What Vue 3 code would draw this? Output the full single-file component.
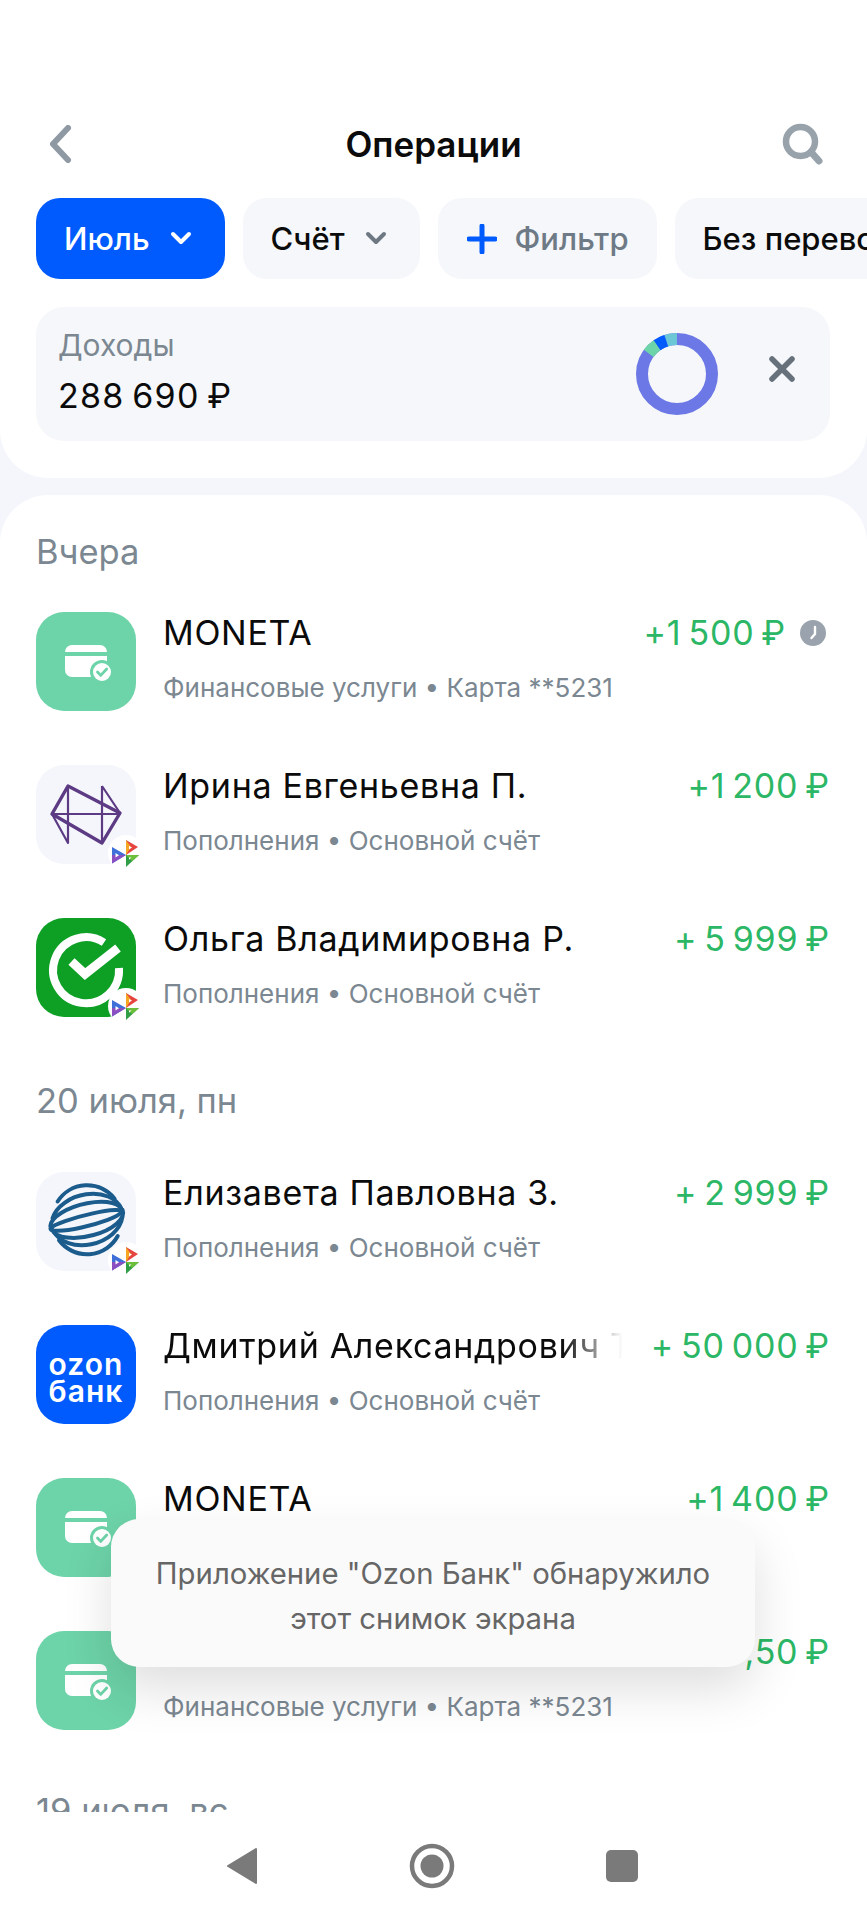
<script setup>
const filters = [
  { label: 'Июль', kind: 'active', chevron: true },
  { label: 'Счёт', kind: 'plain', chevron: true },
  { label: 'Фильтр', kind: 'add' },
  { label: 'Без переводов', kind: 'plain' }
];

const moneta = 'Финансовые услуги • Карта **5231';
const refill = 'Пополнения • Основной счёт';

const sections = [
  {
    date: 'Вчера',
    rows: [
      { logo: 'card', name: 'MONETA', sub: moneta, amount: '+1\u2009500\u2009₽', pending: true },
      { logo: 'prism', name: 'Ирина Евгеньевна П.', sub: refill, amount: '+1\u2009200\u2009₽', badge: true },
      { logo: 'sber', name: 'Ольга Владимировна Р.', sub: refill, amount: '+\u20095\u2009999\u2009₽', badge: true }
    ]
  },
  {
    date: '20 июля, пн',
    rows: [
      { logo: 'globe', name: 'Елизавета Павловна З.', sub: refill, amount: '+\u20092\u2009999\u2009₽', badge: true },
      { logo: 'ozon', name: 'Дмитрий Александрович Т.', sub: refill, amount: '+\u200950\u2009000\u2009₽' },
      { logo: 'card', name: 'MONETA', sub: moneta, amount: '+1\u2009400\u2009₽' },
      { logo: 'card', name: 'MONETA', sub: moneta, amount: '+1\u2009250,50\u2009₽' }
    ]
  },
  { date: '19 июля, вс', rows: [] }
];
</script>

<template>
  <div class="page">
    <main class="content">
      <section class="top">
        <header class="bar">
          <svg class="back" width="24" height="38" viewBox="0 0 24 38">
            <path d="M20 3 5 19l15 16" fill="none" stroke="#8e99a3" stroke-width="6" stroke-linecap="round" stroke-linejoin="round" />
          </svg>
          <h1>Операции</h1>
          <svg class="search" width="42" height="42" viewBox="0 0 42 42">
            <circle cx="18.5" cy="18.5" r="14.5" fill="none" stroke="#98a2ab" stroke-width="6.5" />
            <path d="M29 29l8 9" stroke="#98a2ab" stroke-width="7" stroke-linecap="round" />
          </svg>
        </header>

        <div class="chips">
          <div v-for="f in filters" :key="f.label" class="chip" :class="[f.kind, { drop: f.chevron }]">
            <svg v-if="f.kind === 'add'" class="plus" width="30" height="30" viewBox="0 0 30 30">
              <path d="M15 2v26M2 15h26" stroke="#005bff" stroke-width="5" stroke-linecap="round" />
            </svg>
            <span>{{ f.label }}</span>
            <svg v-if="f.chevron" class="chev" width="22" height="15" viewBox="0 0 22 15">
              <path d="M3 3l8 8 8-8" fill="none" stroke="currentColor" stroke-width="4" stroke-linecap="round" stroke-linejoin="round" />
            </svg>
          </div>
        </div>

        <div class="summary">
          <div class="summary-text">
            <div class="summary-label">Доходы</div>
            <div class="summary-value">288&#8201;690&#8201;₽</div>
          </div>
          <svg class="donut" width="82" height="82" viewBox="0 0 82 82">
            <circle cx="41" cy="41" r="35" fill="none" stroke="#6b78e5" stroke-width="12" />
            <path d="M41 6A35 35 0 0 0 30.2 7.7" fill="none" stroke="#6bc6d6" stroke-width="12" />
            <path d="M30.2 7.7A35 35 0 0 0 21 12.3" fill="none" stroke="#005bff" stroke-width="12" />
            <path d="M21 12.3A35 35 0 0 0 12.6 20.4" fill="none" stroke="#6dd3a8" stroke-width="12" />
          </svg>
          <svg class="close" width="28" height="28" viewBox="0 0 28 28">
            <path d="M4 4l20 20M24 4 4 24" stroke="#66717c" stroke-width="5.5" stroke-linecap="round" />
          </svg>
        </div>
      </section>

      <section class="list">
        <div v-for="s in sections" :key="s.date" class="group">
          <h2>{{ s.date }}</h2>
          <div v-for="(r, i) in s.rows" :key="i" class="row">
            <div class="avatar" :class="r.logo">
              <svg v-if="r.logo === 'card'" width="100" height="99" viewBox="0 0 100 99">
                <path d="M29 40a7 7 0 0 1 7-7h28a7 7 0 0 1 7 7H29z" fill="#fff" />
                <path d="M29 44h42v18a3 3 0 0 1-3 3H36a7 7 0 0 1-7-7z" fill="#fff" />
                <circle cx="66" cy="60" r="12" fill="#6dd3a8" />
                <circle cx="66" cy="60" r="9" fill="#fff" />
                <path d="M61.5 60l3.2 3.4 6-6.4" fill="none" stroke="#6dd3a8" stroke-width="2.8" stroke-linecap="round" stroke-linejoin="round" />
              </svg>

              <svg v-else-if="r.logo === 'prism'" width="100" height="99" viewBox="0 0 100 99">
                <g fill="none" stroke="#5c3b84" stroke-linejoin="round">
                  <path d="M32 21 84 48 66 78 16 49z" stroke-width="3.4" />
                  <path d="M32 21V78L16 49M66 21V78M66 21 84 48M16 49H84" stroke-width="2.2" />
                </g>
              </svg>

              <svg v-else-if="r.logo === 'sber'" width="100" height="99" viewBox="0 0 100 99">
                <path d="M68 24.5A33 33 0 1 0 83 50" fill="none" stroke="#fff" stroke-width="8" />
                <path d="M35.5 43.5 49 56 82 30" fill="none" stroke="#fff" stroke-width="9" />
              </svg>

              <svg v-else-if="r.logo === 'globe'" width="100" height="99" viewBox="0 0 100 99">
                <g fill="none" stroke="#1b5c8d" stroke-width="4" stroke-linecap="round" transform="translate(50.7 47) rotate(-14)">
                  <path d="M-24-24A35 35 0 0 1 32-13" />
                  <path d="M-33-9A36 25 0 0 1 36-2" />
                  <path d="M-37-2A36 15 0 0 1 36 2" />
                  <path d="M-37 0A36 5 0 0 1 35 2" />
                  <path d="M-37 0A36 6 0 0 0 35 2" />
                  <path d="M-36 2A36 16 0 0 0 37 0" />
                  <path d="M-35 4A36 26 0 0 0 35 7" />
                  <path d="M-32 14A35 35 0 0 0 26 24" />
                </g>
              </svg>

              <div v-else-if="r.logo === 'ozon'" class="ozon-mark">
                <span>ozon</span>
                <span>банк</span>
              </div>

              <div v-if="r.badge" class="badge">
                <svg width="28" height="28" viewBox="0 0 28 28">
                  <path d="M14 1 26 8 14 16z" fill="#e5453f" />
                  <path d="M14 1V16L19 8z" fill="#f6a623" />
                  <path d="M17 7 20 8.500 17 10.500z" fill="#fff" />
                  <path d="M0 8v16.500L14 16z" fill="#3f6fd8" />
                  <path d="M0 16v8.500L14 16z" fill="#8a4fc0" />
                  <path d="M3.500 14v4.500l3.500-2.300z" fill="#fff" />
                  <path d="M14 16h13L14 28z" fill="#2f9e46" />
                  <path d="M14 16h13L20 22z" fill="#6cbf3a" />
                  <path d="M17 18.500h2.500l-2.500 2.200z" fill="#fff" />
                </svg>
              </div>
            </div>

            <div class="row-body">
              <div class="row-line">
                <div class="name" :class="{ long: r.name.length > 22 }">{{ r.name }}</div>
                <div class="amount">{{ r.amount }}</div>
                <svg v-if="r.pending" class="clock" width="26" height="26" viewBox="0 0 26 26">
                  <circle cx="13" cy="13" r="13" fill="#9aa3ad" />
                  <path d="M15 7v7l-3.500 4" fill="none" stroke="#fff" stroke-width="2.400" stroke-linecap="round" stroke-linejoin="round" />
                </svg>
              </div>
              <div class="sub">{{ r.sub }}</div>
            </div>
          </div>
        </div>
      </section>
    </main>

    <nav class="nav">
      <svg width="32" height="38" viewBox="0 0 32 38">
        <path d="M30 2v34L2 19z" fill="#7a7a7a" stroke="#7a7a7a" stroke-width="2" stroke-linejoin="round" />
      </svg>
      <svg width="46" height="46" viewBox="0 0 46 46">
        <circle cx="23" cy="23" r="20" fill="none" stroke="#7a7a7a" stroke-width="4.500" />
        <circle cx="23" cy="23" r="11.500" fill="#7a7a7a" />
      </svg>
      <div class="stop"></div>
    </nav>

    <div class="toast">Приложение "Ozon Банк" обнаружило<br />этот снимок экрана</div>
  </div>
</template>

<style>
html,
body {
  margin: 0;
  background: #fff;
}
</style>

<style scoped>
.page {
  position: relative;
  width: 867px;
  height: 1920px;
  display: flex;
  flex-direction: column;
  overflow: hidden;
  background: #f4f6fb;
  font-family: Inter, "Noto Sans", sans-serif;
  color: #0b0b0b;
}
.content {
  flex: 1;
  min-height: 0;
  overflow: hidden;
}
.top {
  height: 478px;
  box-sizing: border-box;
  padding-top: 122px;
  background: #fff;
  border-radius: 0 0 48px 48px;
}
.bar {
  height: 44px;
  padding: 0 43px;
  display: grid;
  grid-template-columns: 1fr auto 1fr;
  align-items: center;
}
.back {
  margin-left: 5px;
}
.search {
  justify-self: end;
}
.bar h1 {
  margin: 0;
  font-size: 35px;
  font-weight: 600;
}
.chips {
  margin-top: 32px;
  padding-left: 36px;
  display: flex;
  gap: 18px;
}
.chip {
  flex: none;
  height: 81px;
  padding: 0 28px;
  border-radius: 24px;
  background: #f5f7fa;
  display: flex;
  align-items: center;
  gap: 18px;
  font-size: 31px;
  font-weight: 500;
  white-space: nowrap;
  color: #6d7883;
}
.chip.drop {
  gap: 20px;
  padding-right: 33px;
}
.chip span {
  color: #0b0b0b;
}
.chip.active {
  background: #005bff;
  color: #fff;
}
.chip.active span {
  color: #fff;
}
.chip.add {
  gap: 18px;
  padding-left: 29px;
}
.chip.add span {
  color: #6e7a85;
}
.summary {
  margin: 28px 37px 0 36px;
  height: 134px;
  box-sizing: border-box;
  padding: 0 34px 0 22px;
  border-radius: 28px;
  background: #f5f7fa;
  display: flex;
  align-items: center;
}
.summary-text {
  flex: 1;
  padding-bottom: 7px;
}
.summary-label {
  font-size: 30px;
  color: #7b8791;
  line-height: 40px;
}
.summary-value {
  margin-top: 10px;
  font-size: 34px;
  letter-spacing: 1.300px;
  line-height: 42px;
}
.close {
  margin-left: 50px;
  margin-top: -10px;
}
.list {
  margin-top: 17px;
  padding: 35px 37px 0 36px;
  background: #fff;
  border-radius: 48px 48px 0 0;
}
.group {
  margin-bottom: 62px;
}
.group:nth-child(2) {
  margin-bottom: 59px;
}
.group h2 {
  margin: 0 0 49px;
  font-size: 34.500px;
  font-weight: 400;
  line-height: 44px;
  color: #7b8791;
}
.group:first-child h2 {
  margin-bottom: 38px;
}
.row {
  display: flex;
  gap: 27px;
  margin-bottom: 54px;
}
.group .row:last-child {
  margin-bottom: 0;
}
.avatar {
  position: relative;
  flex: none;
  width: 100px;
  height: 99px;
  border-radius: 28px;
  background: #f5f6fb;
}
.avatar > svg {
  display: block;
}
.avatar.card {
  background: #6dd3a8;
}
.avatar.sber {
  background: #0da025;
}
.avatar.ozon {
  background: #005bff;
}
.ozon-mark {
  height: 100%;
  box-sizing: border-box;
  padding-top: 6px;
  display: flex;
  flex-direction: column;
  align-items: center;
  justify-content: center;
  color: #fff;
  font-size: 30px;
  font-weight: 600;
  letter-spacing: 1px;
  line-height: 27px;
}
.badge {
  position: absolute;
  left: 72px;
  top: 70px;
  width: 36px;
  height: 36px;
  border-radius: 50%;
  background: #fff;
  display: flex;
  align-items: center;
  justify-content: center;
}
.row-body {
  flex: 1;
  min-width: 0;
}
.row-line {
  display: flex;
  align-items: center;
  height: 42px;
}
.name {
  flex: 1;
  min-width: 0;
  font-size: 34px;
  letter-spacing: 0.7px;
  line-height: 42px;
  white-space: nowrap;
  overflow: hidden;
}
.name.long {
  -webkit-mask-image: linear-gradient(90deg, #000 86%, transparent 99%);
  mask-image: linear-gradient(90deg, #000 86%, transparent 99%);
  margin-right: 24px;
}
.amount {
  flex: none;
  font-size: 34px;
  letter-spacing: 0.8px;
  line-height: 42px;
  color: #2bb765;
  white-space: nowrap;
}
.clock {
  margin-left: 14px;
  margin-right: 4px;
}
.sub {
  margin-top: 16px;
  font-size: 26px;
  line-height: 36px;
  color: #7b8791;
  white-space: nowrap;
}
.nav {
  flex: none;
  height: 108px;
  padding: 0 229px 0 226px;
  box-sizing: border-box;
  background: #fff;
  display: flex;
  align-items: center;
  justify-content: space-between;
}
.stop {
  width: 32px;
  height: 32px;
  border-radius: 5px;
  background: #7a7a7a;
}
.toast {
  position: absolute;
  left: 111px;
  top: 1519px;
  width: 644px;
  height: 148px;
  box-sizing: border-box;
  padding-top: 32px;
  border-radius: 28px;
  background: #fafafa;
  box-shadow: 0 22px 50px rgba(0, 0, 0, 0.13);
  font-size: 29.300px;
  line-height: 45px;
  text-align: center;
  color: #666;
}
</style>
